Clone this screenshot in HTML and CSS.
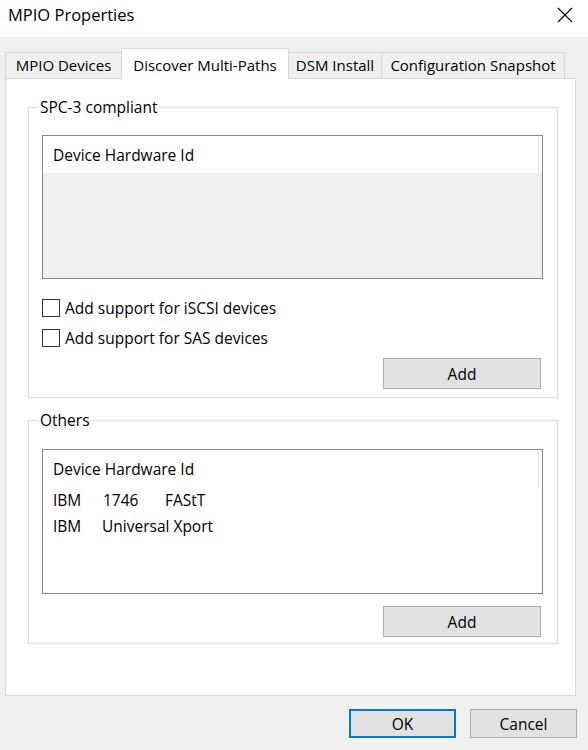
FILE: index.html
```html
<!DOCTYPE html>
<html>
<head>
<meta charset="utf-8">
<title>MPIO Properties</title>
<link rel="stylesheet" href="styles.css">
</head>
<body>
<div class="window">
  <div class="titlebar">
    <span class="title">MPIO Properties</span>
    <svg class="close" width="16" height="16" viewBox="0 0 16 16"><path d="M1 1 L15 15 M15 1 L1 15" stroke="#000" stroke-width="1.1" fill="none"/></svg>
  </div>
  <div class="tabs">
    <div class="tab t1">MPIO Devices</div>
    <div class="tab t2 active">Discover Multi-Paths</div>
    <div class="tab t3">DSM Install</div>
    <div class="tab t4">Configuration Snapshot</div>
  </div>
  <div class="panel">
    <fieldset class="group g1">
      <legend>SPC-3 compliant</legend>
      <div class="listbox lb1">
        <div class="lb-header"><span class="lb-cell">Device Hardware Id</span></div>
        <div class="lb-empty"></div>
      </div>
      <label class="check first"><span class="box"></span>Add support for iSCSI devices</label>
      <label class="check"><span class="box"></span>Add support for SAS devices</label>
      <div class="btnrow"><button class="btn add">Add</button></div>
    </fieldset>
    <fieldset class="group g2">
      <legend>Others</legend>
      <div class="listbox lb2">
        <div class="lb-header"><span class="lb-cell">Device Hardware Id</span></div>
        <div class="lb-row"><span class="c1">IBM</span><span class="c2">1746</span><span class="c3">FAStT</span></div>
        <div class="lb-row"><span class="c1">IBM</span><span class="c2b">Universal Xport</span></div>
      </div>
      <div class="btnrow"><button class="btn add">Add</button></div>
    </fieldset>
  </div>
  <div class="footer">
    <button class="btn dlg ok">OK</button>
    <button class="btn dlg">Cancel</button>
  </div>
</div>
</body>
</html>
```

FILE: styles.css
```css
html, body {
  margin: 0;
  padding: 0;
}
body {
  background: #f0f0f0;
  font-family: "Open Sans", "Noto Sans", sans-serif;
  font-size: 15.5px;
  color: #000;
}
.window {
  width: 588px;
  height: 750px;
  display: flex;
  flex-direction: column;
  box-sizing: border-box;
}
.titlebar {
  height: 37px;
  flex: none;
  background: #fff;
  display: flex;
  justify-content: space-between;
  align-items: flex-start;
  padding: 4px 15px 0 8px;
  box-sizing: border-box;
}
.title {
  font-size: 16.5px;
  line-height: 22px;
}
.close {
  margin-top: 3px;
}
.tabs {
  display: flex;
  align-items: flex-end;
  margin-top: 11px;
  padding-left: 5px;
  height: 30px;
  position: relative;
  z-index: 1;
  font-size: 15px;
}
.tab {
  height: 26px;
  box-sizing: border-box;
  border: 1px solid #d9d9d9;
  border-bottom: none;
  border-left: none;
  background: #f0f0f0;
  line-height: 24px;
  text-align: center;
  white-space: nowrap;
}
.t1 {
  width: 117px;
  border-left: 1px solid #d9d9d9;
}
.t2 {
  width: 168px;
}
.t3 {
  width: 93px;
}
.t4 {
  width: 183px;
}
.tab.active {
  height: 31px;
  margin-bottom: -1px;
  background: #fff;
  padding-top: 4px;
  padding-bottom: 2px;
  margin-left: -1px;
  border-left: 1px solid #d9d9d9;
}
.panel {
  margin-left: 5px;
  width: 571px;
  height: 618px;
  flex: none;
  box-sizing: border-box;
  background: #fff;
  border: 1px solid #d9d9d9;
  padding: 0 17px 0 22px;
}
.group {
  margin: 0;
  border: 1px solid #dcdcdc;
  padding: 0 14px 8px 13px;
  min-width: 0;
}
.group legend {
  padding: 0 2px;
  margin-left: -4px;
  line-height: 20px;
}
.g1 {
  margin-top: 18px;
}
.g2 {
  margin-top: 12px;
  padding-bottom: 6px;
}
.listbox {
  border: 1px solid #828790;
  box-sizing: border-box;
  background: #fff;
  display: flex;
  flex-direction: column;
}
.lb1 {
  height: 144px;
  margin-top: 18px;
}
.lb2 {
  height: 145px;
  margin-top: 19px;
}
.lb-header {
  height: 37px;
  flex: none;
  display: flex;
  padding-right: 3px;
  background: #fff;
}
.lb-cell {
  flex: 1;
  border-right: 1px solid #e5e5e5;
  padding-left: 10px;
  line-height: 36px;
  margin-top: 1px;
}
.lb-empty {
  flex: 1;
  background: #f0f0f0;
}
.lb-row {
  height: 26px;
  line-height: 26px;
  display: flex;
  padding-left: 10px;
}
.c1 { width: 50px; }
.c2 { width: 62px; }
.c2b { margin-left: -1px; }
.check {
  display: flex;
  align-items: center;
  height: 18px;
  margin-top: 12px;
}
.check.first {
  margin-top: 20px;
}
.box {
  width: 16px;
  height: 16px;
  border: 1px solid #333;
  background: #fff;
  margin-right: 5px;
  flex: none;
}
.btnrow {
  display: flex;
  justify-content: flex-end;
  padding-right: 2px;
  margin-top: 11px;
}
.lb2 + .btnrow {
  margin-top: 12px;
}
.btn {
  font-family: inherit;
  font-size: 15.5px;
  color: #000;
  background: #e1e1e1;
  border: 1px solid #adadad;
  border-radius: 0;
  padding: 0;
  margin: 0;
}
.add {
  width: 158px;
  height: 31px;
}
.footer {
  display: flex;
  justify-content: flex-end;
  gap: 14px;
  padding-right: 11px;
  margin-top: 13px;
}
.dlg {
  width: 107px;
  height: 29px;
}
.ok {
  border: 2px solid #0078d7;
}
```
